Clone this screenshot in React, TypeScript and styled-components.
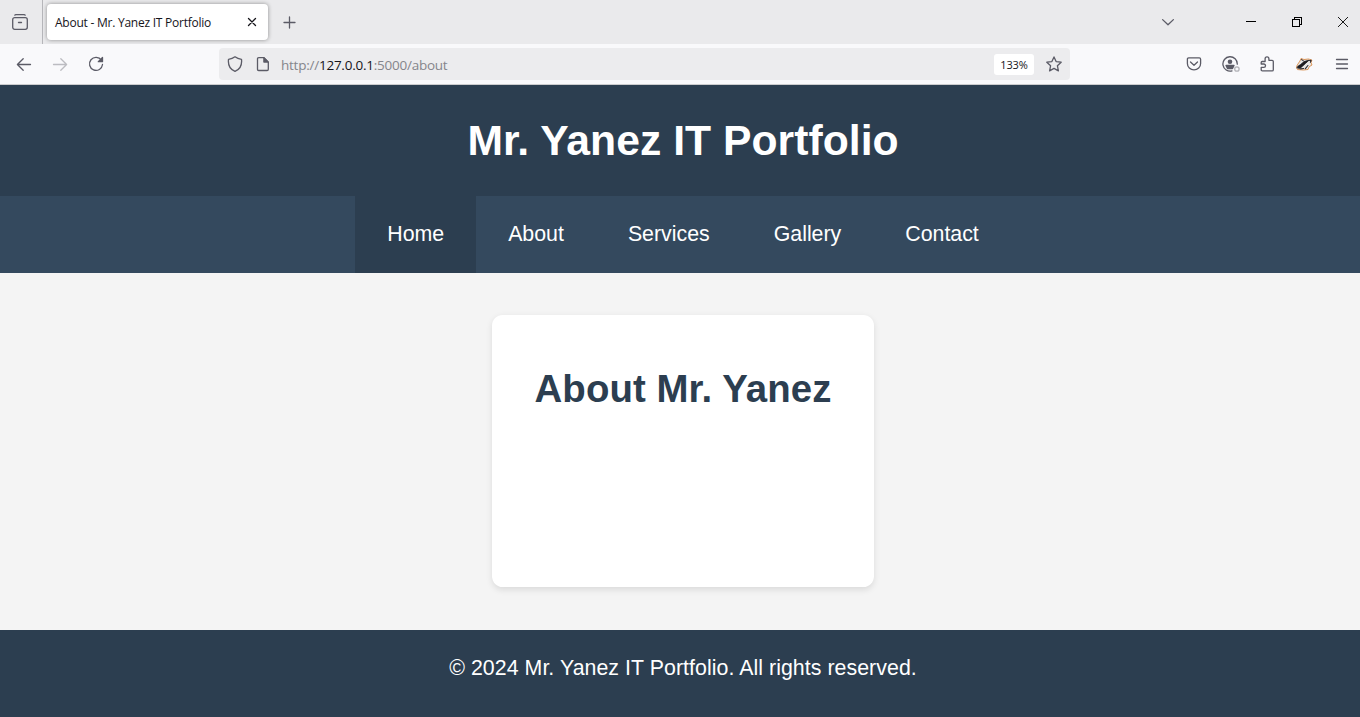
import React from 'react';
import styled, { createGlobalStyle } from 'styled-components';

const GlobalStyle = createGlobalStyle`
  * { box-sizing: border-box; }
  html, body { margin: 0; height: 100%; overflow: hidden; }
  body { background: #f4f4f4; font-family: "Liberation Sans", Arial, sans-serif; }
`;

const Window = styled.div`
  height: 717px;
  display: flex;
  flex-direction: column;
  overflow: hidden;
`;

const TabStrip = styled.div`
  flex: none;
  height: 44px;
  display: flex;
  align-items: center;
  background: #eaeaec;
  font-family: "Noto Sans", "Open Sans", sans-serif;
`;

const FirefoxView = styled.div`
  width: 43px;
  height: 44px;
  padding-left: 12px;
  display: flex;
  align-items: center;
  border-right: 1px solid #b6b6ba;
`;

const Tab = styled.div`
  width: 221px;
  height: 36px;
  margin-left: 4px;
  padding: 0 10px 0 8px;
  display: flex;
  align-items: center;
  justify-content: space-between;
  background: #fff;
  border-radius: 4px;
  box-shadow: 0 0 4px rgba(0, 0, 0, 0.4);
`;

const TabTitle = styled.span`
  font-family: "Open Sans", sans-serif;
  font-size: 12px;
  line-height: 16px;
  letter-spacing: -0.24px;
  padding-top: 2px;
  color: #15141a;
  white-space: nowrap;
`;

const IconSvg = styled.svg<{ $color?: string }>`
  display: block;
  flex: none;
  fill: none;
  stroke: ${(p) => p.$color || '#5b5b66'};
  stroke-width: 1.3;
  stroke-linecap: round;
  stroke-linejoin: round;
`;

const NewTab = styled.div`
  margin-left: 14px;
`;

const WindowControls = styled.div`
  margin-left: auto;
  padding-right: 9px;
  display: flex;
  align-items: center;
`;

const Control = styled.div<{ $gap: number }>`
  margin-right: ${(p) => p.$gap}px;
`;

const Toolbar = styled.div`
  flex: none;
  height: 41px;
  display: flex;
  align-items: center;
  background: #f9f9fb;
  border-bottom: 1px solid #ccccce;
`;

const NavButtons = styled.div`
  width: 219px;
  padding-left: 16px;
  display: flex;
  gap: 20px;
`;

const UrlBar = styled.div`
  width: 851px;
  height: 32px;
  padding: 0 8px;
  display: flex;
  align-items: center;
  background: #ececee;
  border-radius: 4px;
`;

const PageIcon = styled.div`
  margin: 0 10px 0 12px;
`;

const Url = styled.span`
  flex: 1;
  font-family: "Open Sans", sans-serif;
  font-size: 13.5px;
  line-height: 20px;
  color: #85858b;
  letter-spacing: -0.24px;
  padding-top: 1px;
`;

const Host = styled.span`
  color: #15141a;
`;

const Zoom = styled.span`
  width: 40px;
  height: 21px;
  margin-right: 12px;
  background: #fff;
  border-radius: 3px;
  text-align: center;
  font-family: "Open Sans", sans-serif;
  font-size: 11px;
  line-height: 22px;
  letter-spacing: -0.1px;
  color: #15141a;
`;

const Actions = styled.div`
  margin-left: auto;
  padding-right: 10px;
  display: flex;
  align-items: center;
  gap: 20px;
`;

const Page = styled.div`
  flex: 1;
  width: 1366px;
  display: flex;
  flex-direction: column;
  background: #f4f4f4;
`;

const Header = styled.header`
  height: 111px;
  background: #2c3e50;
  text-align: center;
`;

const SiteTitle = styled.h1`
  margin: 0;
  padding-top: 31px;
  font-size: 42.667px;
  line-height: 48px;
  letter-spacing: 0.03px;
  color: #fff;
`;

const Nav = styled.nav`
  height: 77px;
  display: flex;
  justify-content: center;
  background: #34495e;
`;

const NavLink = styled.a<{ $active?: boolean }>`
  padding: 0 32px;
  font-size: 21.333px;
  line-height: 76px;
  color: #fff;
  background: ${(p) => (p.$active ? '#2c3e50' : 'transparent')};
`;

const Main = styled.main`
  height: 357px;
  padding-top: 42px;
  display: flex;
  justify-content: center;
  align-items: flex-start;
`;

const Card = styled.section`
  width: 382px;
  height: 272px;
  padding-top: 52px;
  background: #fff;
  border-radius: 10.667px;
  box-shadow: 0 2.667px 6.667px rgba(0, 0, 0, 0.1);
  text-align: center;
`;

const CardTitle = styled.h2`
  margin: 0;
  font-size: 38.4px;
  line-height: 44px;
  letter-spacing: 0.07px;
  color: #2c3e50;
`;

const Footer = styled.footer`
  flex: 1;
  padding-top: 26px;
  background: #2c3e50;
  color: #fff;
  text-align: center;
  font-size: 21.333px;
  line-height: 25px;
  letter-spacing: 0.05px;
`;

const links = ['Home', 'About', 'Services', 'Gallery', 'Contact'];

export default function App() {
  return (
    <Window>
      <GlobalStyle />
      <TabStrip>
        <FirefoxView>
          <IconSvg width="16" height="16" viewBox="0 0 16 16">
            <path d="M2.8 1.2Q3 .7 4 .7h8q1 0 1.2.5" />
            <rect x=".7" y="3.7" width="14.6" height="11.6" rx="2" />
            <path d="M6.5 8.5h3" />
          </IconSvg>
        </FirefoxView>
        <Tab>
          <TabTitle>About - Mr. Yanez IT Portfolio</TabTitle>
          <IconSvg width="12" height="12" viewBox="0 0 12 12" $color="#15141a">
            <path d="M2.5 2.5l7 7M9.5 2.5l-7 7" />
          </IconSvg>
        </Tab>
        <NewTab>
          <IconSvg width="14" height="14" viewBox="0 0 14 14">
            <path d="M7.5 2v11M2 7.5h11" />
          </IconSvg>
        </NewTab>
        <WindowControls>
          <Control $gap={71}>
            <IconSvg width="14" height="14" viewBox="0 0 14 14">
              <path d="M1.6 4.6L7 9.7l5.4-5.1" />
            </IconSvg>
          </Control>
          <Control $gap={35}>
            <IconSvg width="11" height="12" viewBox="0 0 11 12" $color="#000" shapeRendering="crispEdges">
              <path d="M.5 5.5h9" />
            </IconSvg>
          </Control>
          <Control $gap={36}>
            <IconSvg width="10" height="10" viewBox="0 0 10 10" $color="#000" shapeRendering="crispEdges">
              <path d="M.5 2.5h7v7h-7zM2.5 2V.5h7v7H8" />
            </IconSvg>
          </Control>
          <Control $gap={3}>
            <IconSvg width="10" height="10" viewBox="0 0 10 10" $color="#000">
              <path d="M.3.3l9.4 9.4M9.700.3L.3 9.700" style={{ strokeWidth: 0.9 }} />
            </IconSvg>
          </Control>
        </WindowControls>
      </TabStrip>
      <Toolbar>
        <NavButtons>
          <IconSvg width="16" height="16" viewBox="0 0 16 16">
            <path d="M1.500 8.500h13M7.200 2.700L1.400 8.500l5.800 5.800" />
          </IconSvg>
          <IconSvg width="16" height="16" viewBox="0 0 16 16" $color="#bcbcc1">
            <path d="M14.500 8.500h-13M8.800 2.700l5.800 5.800-5.800 5.800" />
          </IconSvg>
          <IconSvg width="16" height="16" viewBox="0 0 16 16">
            <path d="M13.400 4.200A6.500 6.500 0 1 0 14.500 8.500" />
            <path d="M14.500 1.500v4.200h-4.200z" fill="#5b5b66" />
          </IconSvg>
        </NavButtons>
        <UrlBar>
          <IconSvg width="16" height="16" viewBox="0 0 16 16">
            <path d="M8 .8C6.200 2.300 4 3.100 1.500 3.300.900 8.800 3.200 13.500 8 15.300c4.800-1.800 7.100-6.500 6.500-12C12 3.100 9.800 2.300 8 .8z" />
          </IconSvg>
          <PageIcon>
            <IconSvg width="16" height="16" viewBox="0 0 16 16">
              <path d="M3.700 1.700h5.200l4.400 4.400v7.200q0 1.200-1.200 1.200H3.700q-1.200 0-1.200-1.200V2.900q0-1.200 1.200-1.200z" />
              <path d="M8.900 1.700v4.400h4.400z" fill="#5b5b66" />
            </IconSvg>
          </PageIcon>
          <Url>http://<Host>127.0.0.1</Host>:5000/about</Url>
          <Zoom>133%</Zoom>
          <IconSvg width="16" height="16" viewBox="0 0 16 16">
            <path d="M8 .9l2.100 4.700 5.100.6-3.800 3.500 1 5.200L8 12.400l-4.400 2.500 1-5.200L.8 6.200l5.100-.6z" />
          </IconSvg>
        </UrlBar>
        <Actions>
          <IconSvg width="16" height="16" viewBox="0 0 16 16">
            <path d="M2.700 1.900h10.600q1.300 0 1.300 1.300v4.200c0 3.800-2.900 6.500-6.600 6.500s-6.600-2.700-6.600-6.500V3.200q0-1.300 1.300-1.300z" />
            <path d="M4.500 6L8 9.200 11.500 6" />
          </IconSvg>
          <IconSvg width="18" height="16" viewBox="0 0 18 16">
            <path d="M15.300 8.200A7.200 7.200 0 1 0 10 14.900" />
            <circle cx="8" cy="5.800" r="2.300" fill="#5b5b66" stroke="none" />
            <path d="M4 9.500h8l-1.500 3H5.500z" fill="#5b5b66" />
            <circle cx="14.900" cy="13" r="2.200" stroke="#b4b4b9" />
          </IconSvg>
          <IconSvg width="16" height="16" viewBox="1 0 16 16">
            <path d="M3.200 5.500h2.900V2.700a1.900 1.900 0 0 1 3.800 0v1.600h3.200q1.200 0 1.200 1.200v8.200q0 1.200-1.200 1.200H3.400q-1.200 0-1.200-1.200v-2.300h2.600a1.700 1.700 0 0 0 0-3.400H2.200V6.500q0-1 1-1z" />
          </IconSvg>
          <IconSvg width="18" height="16" viewBox="1 0 18 16">
            <path d="M1.500 11C2.200 7.500 5 6.500 6 2.500l3 1L13.500 3l3.400 1-.9 2.700 1 2.300-2.800 1.700-1.200 2.800-4.500.5-5.600-.4z" fill="#e9e8e7" stroke="#d98a45" style={{ strokeWidth: 0.9 }} />
            <path d="M2 11.400C4.500 8.500 6.500 8.700 8.800 5.600l5.200-1.400-3.500 3.200L5 12.400z" fill="#1d1c20" stroke="#1d1c20" style={{ strokeWidth: 0.8 }} />
            <path d="M6.600 3.600l1.600 1M14.500 4.500l1.600-.1-.7 1.800M12.900 9.500l-2.500 3.200M5.500 12.900l3.200-.4" stroke="#2d2b31" style={{ strokeWidth: 1.1 }} />
          </IconSvg>
          <IconSvg width="16" height="16" viewBox="0 0 16 16">
            <path d="M2.500 3.500h11M2.500 8h11M2.500 12.500h11" />
          </IconSvg>
        </Actions>
      </Toolbar>
      <Page>
        <Header>
          <SiteTitle>Mr. Yanez IT Portfolio</SiteTitle>
        </Header>
        <Nav>
          {links.map((label, i) => (
            <NavLink key={label} $active={i === 0}>{label}</NavLink>
          ))}
        </Nav>
        <Main>
          <Card>
            <CardTitle>About Mr. Yanez</CardTitle>
          </Card>
        </Main>
        <Footer>© 2024 Mr. Yanez IT Portfolio. All rights reserved.</Footer>
      </Page>
    </Window>
  );
}
